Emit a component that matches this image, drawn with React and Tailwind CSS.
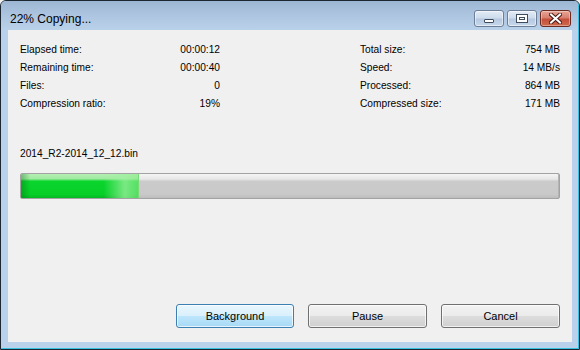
import React from 'react';

const leftStats = [
  ['Elapsed time:', '00:00:12'],
  ['Remaining time:', '00:00:40'],
  ['Files:', '0'],
  ['Compression ratio:', '19%'],
];

const rightStats = [
  ['Total size:', '754 MB'],
  ['Speed:', '14 MB/s'],
  ['Processed:', '864 MB'],
  ['Compressed size:', '171 MB'],
];

const StatColumn = ({ rows }) => (
  <div className="w-[200px] flex flex-col">
    {rows.map(([label, value]) => (
      <div key={label} className="h-[18px] flex items-center justify-between">
        <span>{label}</span>
        <span>{value}</span>
      </div>
    ))}
  </div>
);

const CaptionButton = ({ kind }) => {
  const isClose = kind === 'close';
  return (
    <div
      className={
        isClose
          ? 'w-[31px] h-[17px] rounded-[3px] border border-[#6b2a22] bg-[linear-gradient(to_bottom,#e8a496_0%,#d8806f_45%,#c44f3a_55%,#cf6a4f_100%)] shadow-[inset_0_0_0_1px_rgba(255,255,255,0.35)] flex items-center justify-center'
          : 'w-[30px] h-[17px] rounded-[3px] border border-[#6d7f98] bg-[linear-gradient(to_bottom,#e3ecf6_0%,#cfdcec_45%,#b6c9e1_55%,#c7d8eb_100%)] shadow-[inset_0_0_0_1px_rgba(255,255,255,0.5)] flex items-center justify-center'
      }
    >
      {kind === 'min' && (
        <svg width="12" height="15" viewBox="0 0 12 15">
          <rect x="1.5" y="8.5" width="9" height="3" rx="0.5" fill="#fff" stroke="#3f4c5e" />
        </svg>
      )}
      {kind === 'max' && (
        <svg width="12" height="10" viewBox="0 0 12 10">
          <rect x="0.5" y="0.5" width="11" height="8" fill="#fff" stroke="#3f4c5e" />
          <rect x="3.5" y="3.5" width="5" height="2" fill="#fff" stroke="#3f4c5e" />
        </svg>
      )}
      {isClose && (
        <svg width="13" height="11" viewBox="0 0 13 11">
          <path d="M2 1.5 L11 9.5 M11 1.5 L2 9.5" stroke="#4a1a14" strokeWidth="4" strokeLinecap="square" />
          <path d="M2 1.5 L11 9.5 M11 1.5 L2 9.5" stroke="#fff" strokeWidth="2" strokeLinecap="square" />
        </svg>
      )}
    </div>
  );
};

const DialogButton = ({ children, focused }) => (
  <button
    className={
      focused
        ? 'w-[118px] h-[24px] rounded-[3px] border border-[#3c7fb1] bg-[linear-gradient(to_bottom,#eaf6fd_0%,#d9f0fc_50%,#bee6fd_50%,#a7d9f5_100%)] shadow-[inset_0_0_0_1px_rgba(255,255,255,0.7)] text-[11px] text-black'
        : 'w-[119px] h-[24px] rounded-[3px] border border-[#707070] bg-[linear-gradient(to_bottom,#f2f2f2_0%,#ebebeb_50%,#dddddd_50%,#cfcfcf_100%)] shadow-[inset_0_0_0_1px_rgba(255,255,255,0.7)] text-[11px] text-black'
    }
  >
    {children}
  </button>
);

const App = () => {
  return (
    <div className="w-[580px] h-[350px] bg-[#f0f0f0]">
      <div className="w-[580px] h-[350px] border border-[#1c2631] rounded-t-[6px] overflow-hidden bg-[#b9d1ea] font-['Liberation_Sans',Arial,sans-serif] text-black">
        <div className="h-full flex flex-col border-r border-b border-[#37c0df]">
          <div className="h-[29px] shrink-0 flex items-start justify-between pl-[9px] pr-[7px] bg-[linear-gradient(to_bottom,#9db6d3_0%,#adc5e0_50%,#bad1ea_100%)]">
            <div className="pt-[11px] text-[12px] leading-[14px] text-black">22% Copying...</div>
            <div className="pt-[9px] flex gap-[3px]">
              <CaptionButton kind="min" />
              <CaptionButton kind="max" />
              <CaptionButton kind="close" />
            </div>
          </div>

          <div className="flex-1 ml-[7px] mr-[6px] mb-[6px] bg-[#f0f0f0] flex flex-col px-[12px] pt-[11px] pb-[14px] text-[10.2px]">
            <div className="flex justify-between">
              <StatColumn rows={leftStats} />
              <StatColumn rows={rightStats} />
            </div>

            <div className="mt-[32px] h-[18px] flex items-center">2014_R2-2014_12_12.bin</div>

            <div className="mt-[10px] h-[26px] rounded-[2px] border border-[#a3a3a3] bg-[linear-gradient(to_bottom,#f5f5f5_0%,#e6e6e6_22%,#cbcbcb_30%,#c9c9c9_85%,#bdbdbd_100%)] shadow-[inset_-1px_0_0_#b3b3b3] overflow-hidden">
              <div className="relative h-full w-[22%] bg-[linear-gradient(to_bottom,#b4efb4_0%,#a0eaa0_20%,#0ad52d_30%,#06cf28_85%,#05b824_100%)] shadow-[inset_-1px_0_0_#5cc65c]">
                <div className="absolute inset-0 bg-[linear-gradient(to_right,rgba(0,90,10,0.35)_0%,rgba(0,90,10,0)_8%,rgba(0,0,0,0)_70%,rgba(160,240,160,0.75)_88%,rgba(140,235,140,0.55)_100%)]" />
              </div>
            </div>

            <div className="mt-auto flex justify-end gap-[14px]">
              <DialogButton focused>Background</DialogButton>
              <DialogButton>Pause</DialogButton>
              <DialogButton>Cancel</DialogButton>
            </div>
          </div>
        </div>
      </div>
    </div>
  );
};

export default App;
